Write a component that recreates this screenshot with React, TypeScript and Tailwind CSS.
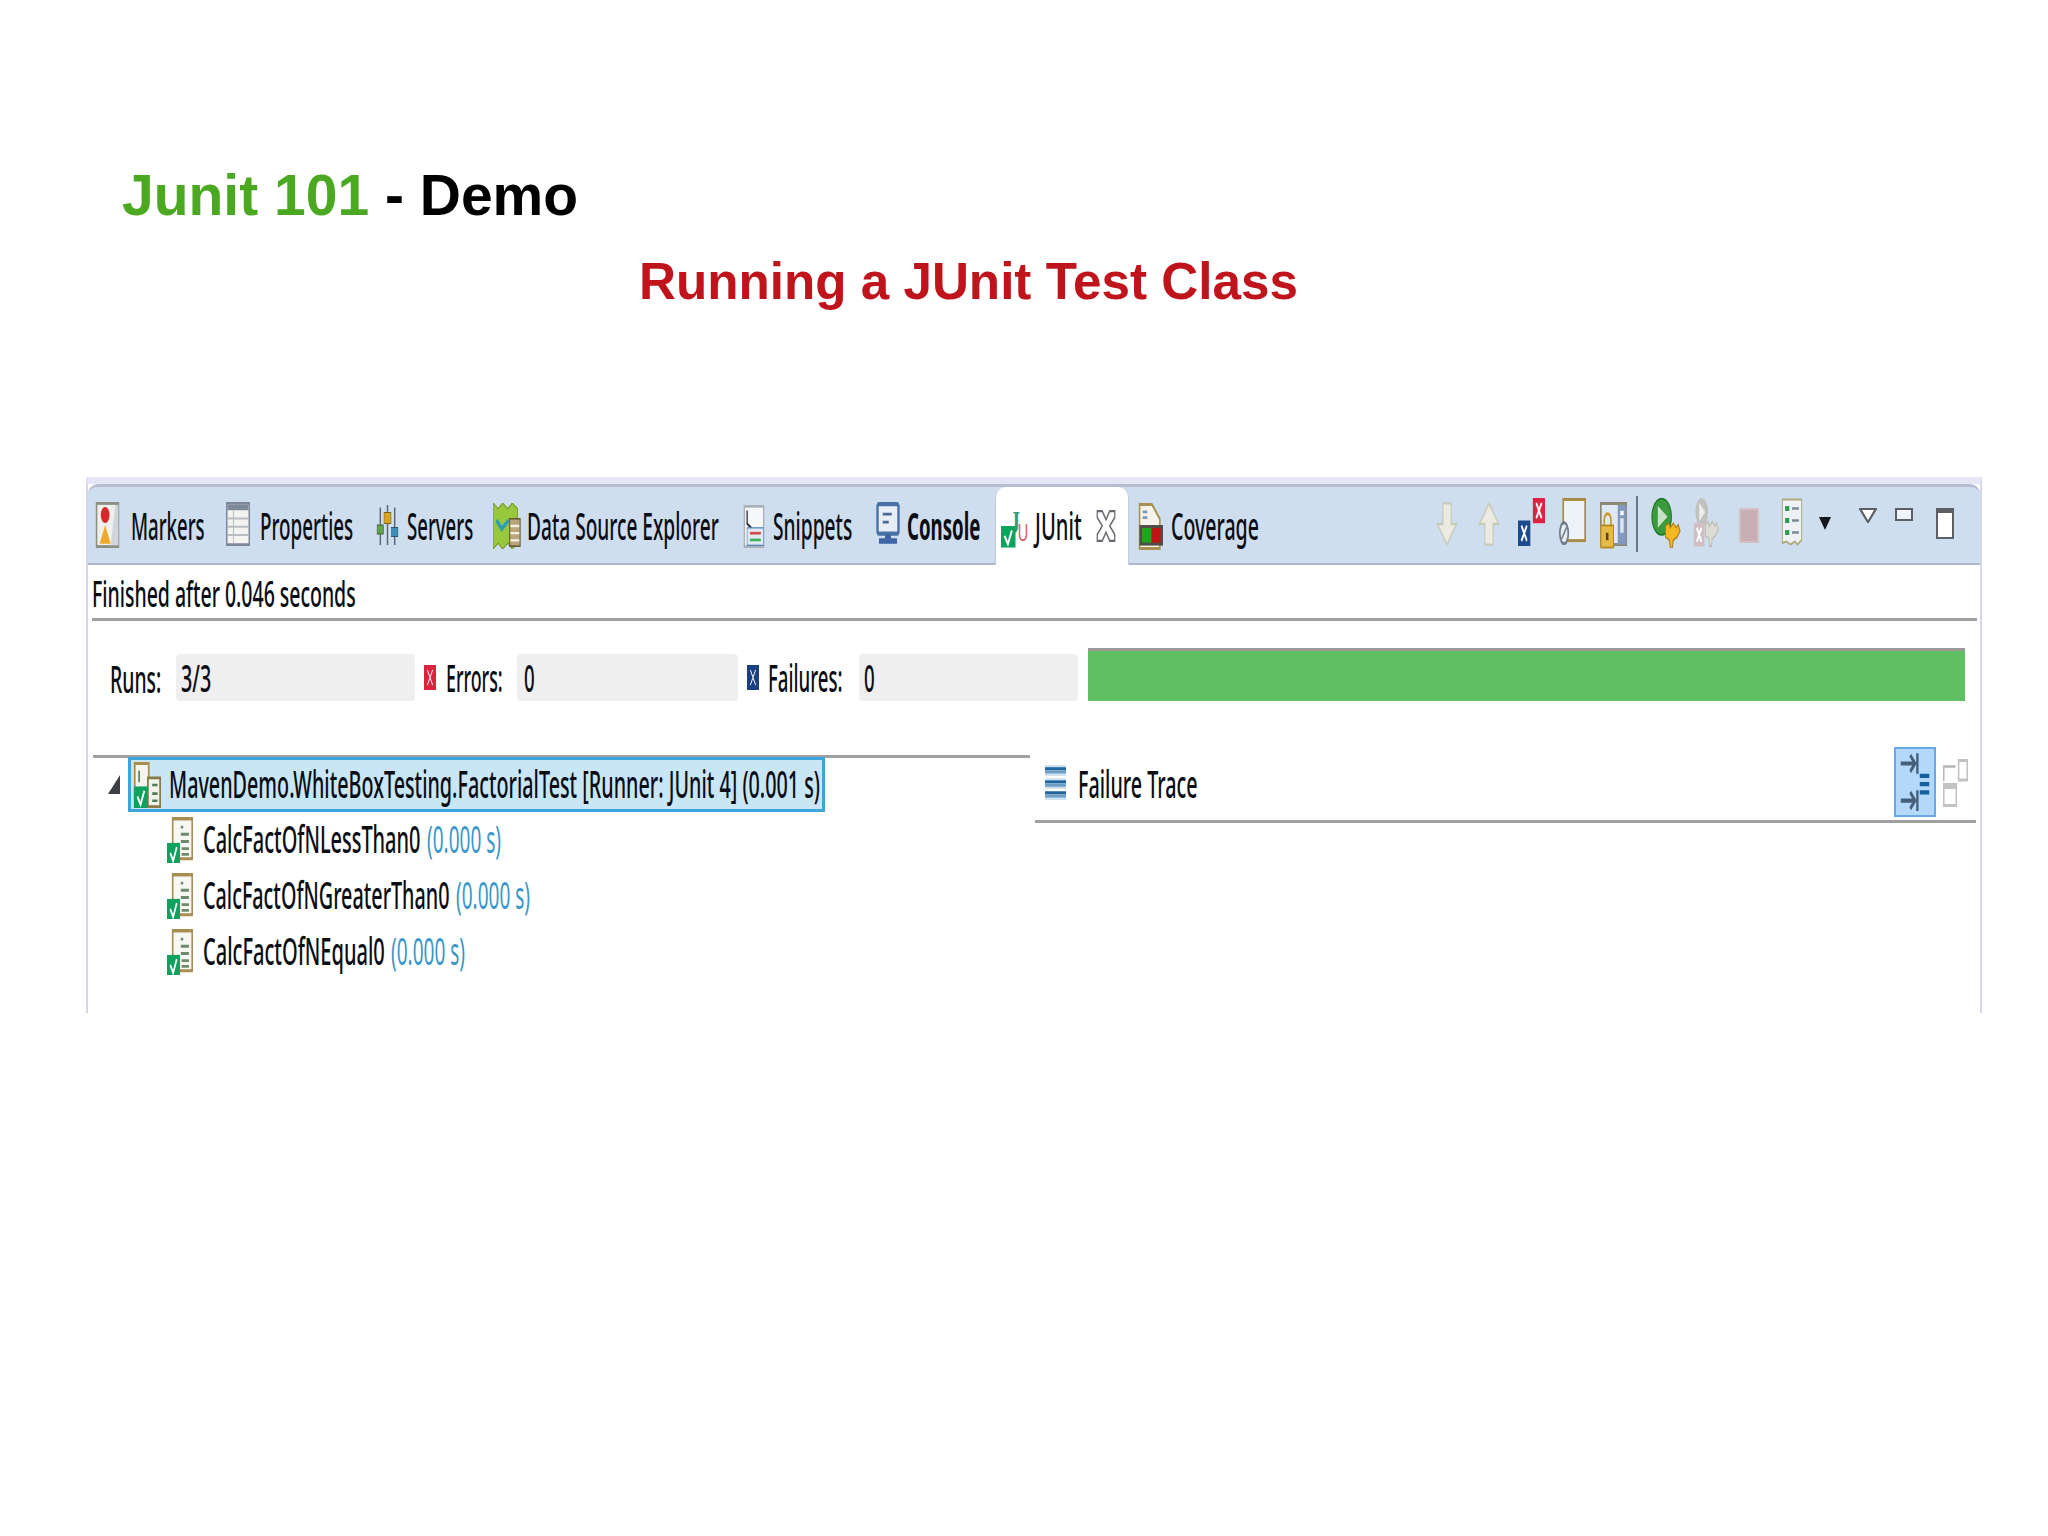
import type { ReactNode } from 'react';
import { twMerge } from 'tailwind-merge';
import { clsx } from 'clsx';

// The reference is a screenshot stretched vertically, so labels get squeezed on x
const Txt = ({ className, children }: { className?: string; children: ReactNode }) => (
  <span className={twMerge('block shrink-0 origin-left scale-x-[0.49] whitespace-nowrap text-[38px] font-medium leading-none text-[#0a0d14]', className)}>{children}</span>
);

const Ico = ({ className, children }: { className?: string; children: ReactNode }) => (
  <svg viewBox="0 0 16 16" preserveAspectRatio="none" className={clsx('block shrink-0', className)}>
    {children}
  </svg>
);

const CheckBox = ({ x = 0, y = 8.5 }: { x?: number; y?: number }) => (
  <g>
    <rect x={x} y={y} width="8" height="7.5" fill="#0fa25c" />
    <path d={`M${x + 2} ${y + 3.5}l1.8 2.8l2.2-4.8`} fill="none" stroke="#fff" strokeWidth="1" />
  </g>
);

const XBox = ({ x, y, w, h, fill }: { x: number; y: number; w: number; h: number; fill: string }) => (
  <g>
    <rect x={x} y={y} width={w} height={h} fill={fill} />
    <path d={`M${x + w * 0.28} ${y + h * 0.2}L${x + w * 0.72} ${y + h * 0.8}M${x + w * 0.72} ${y + h * 0.2}L${x + w * 0.28} ${y + h * 0.8}`} stroke="#fff" strokeWidth="1" />
  </g>
);

const MarkersIcon = () => (
  <Ico className="mt-[15px] h-[46px] w-[25px]">
    <rect x="1" y="0.5" width="14" height="15" fill="#eef0ee" stroke="#8d8f80" />
    <path d="M13 1h2v14h-5z" fill="#cfd6dc" />
    <circle cx="6.5" cy="4.5" r="2.8" fill="#d62a2a" />
    <path d="M6.5 8L10 14.5H3z" fill="#f0a828" />
  </Ico>
);

const PropertiesIcon = () => (
  <Ico className="mt-[15px] h-[44px] w-[24px]">
    <rect x="0.5" y="0.5" width="15" height="15" fill="#f3f3f1" stroke="#7f8898" />
    <rect x="1" y="1" width="14" height="2" fill="#7f8898" />
    <path d="M1 6h14M1 9h14M1 12h14M5 3v12" stroke="#b9bdc4" strokeWidth="0.7" />
  </Ico>
);

const ServersIcon = () => (
  <Ico className="mt-[18px] h-[40px] w-[23px]">
    <path d="M3 1v15M8 0v16M13 1v15" stroke="#5c6670" strokeWidth="1" />
    <rect x="0.8" y="8" width="4.4" height="3.6" fill="#5fa34a" stroke="#4a5a40" strokeWidth="0.4" />
    <rect x="5.6" y="3" width="4.8" height="4.4" fill="#d9a520" stroke="#7a6420" strokeWidth="0.4" />
    <rect x="10.8" y="9" width="4.4" height="3.6" fill="#3c8db8" stroke="#2a5a7a" strokeWidth="0.4" />
  </Ico>
);

const DataSourceIcon = () => (
  <Ico className="mt-[16px] h-[46px] w-[28px]">
    <path d="M0 0l3 2l2.5-2l3 2l2.5-2l3 2v12l-3 2l-2.5-2l-3 2l-2.5-2l-3 2z" fill="#98c83c" stroke="#7a9a2c" strokeWidth="0.5" />
    <path d="M2 6l3 3l4-3" stroke="#2f9fb0" strokeWidth="1.6" fill="none" />
    <rect x="9.5" y="5.5" width="6" height="9.5" fill="#b8a578" stroke="#6c5c38" strokeWidth="0.6" />
    <path d="M10 8h5M10 10.5h5M10 13h5" stroke="#f4f0e0" strokeWidth="0.8" />
  </Ico>
);

const SnippetsIcon = () => (
  <Ico className="mt-[18px] h-[43px] w-[22px]">
    <rect x="1" y="0.5" width="14" height="15" fill="#f6f7f8" stroke="#aab0b8" />
    <path d="M3 2v5l4 2" stroke="#20242c" strokeWidth="0.9" fill="none" />
    <rect x="3" y="8.5" width="12" height="6.5" fill="#dfeaf4" stroke="#5b88b8" strokeWidth="0.5" />
    <path d="M5 10.5h8" stroke="#d84848" />
    <path d="M5 13h8" stroke="#3fae5a" />
  </Ico>
);

const ConsoleIcon = () => (
  <Ico className="mt-[15px] h-[43px] w-[24px]">
    <rect x="1" y="0.8" width="14" height="11" rx="1" fill="#e8eef6" stroke="#4a70a8" strokeWidth="1.6" />
    <path d="M4.5 4.5h6M4.5 7.5h4" stroke="#4a6a98" strokeWidth="1" />
    <path d="M6 12h4v1.5h4V15.5H2v-2h4z" fill="#3f66a4" />
  </Ico>
);

const JUnitIcon = () => (
  <Ico className="mt-[16px] h-[46px] w-[29px] overflow-visible">
    <text x="5" y="10.5" fontFamily="'Liberation Serif', serif" fontWeight="700" fontSize="11" fill="#3a9a78">J</text>
    <text x="9.2" y="13.2" fontFamily="'Liberation Sans', sans-serif" fontSize="8" fill="#d8586a">U</text>
    <CheckBox y={8} x={0} />
  </Ico>
);

const CoverageIcon = () => (
  <Ico className="mt-[16px] h-[47px] w-[25px]">
    <path d="M1 0.5h8l5 5v10H1z" fill="#f6f4ea" stroke="#a89050" />
    <path d="M3 3h3M3 5h3" stroke="#7c98c0" strokeWidth="0.9" />
    <rect x="1" y="7.5" width="15" height="7" fill="#504c48" />
    <rect x="2.5" y="8.5" width="6" height="5" fill="#1ca81c" />
    <rect x="9" y="8.5" width="5.5" height="5" fill="#c21414" />
  </Ico>
);

const TestIcon = () => (
  <Ico className="h-[46px] w-[26px]">
    <path d="M3.5 0.5h12v14h-12z" fill="#f8f8f2" stroke="#a78e50" />
    <rect x="3.5" y="0" width="12" height="1.2" fill="#a78e50" />
    <path d="M8.5 3.5h1.5M8.5 6h5M8.5 8.5h5M9 11h4.5M9 13h4.5" stroke="#6f8a6c" strokeWidth="1" />
    <CheckBox y={9} />
  </Ico>
);

const RootIcon = () => (
  <Ico className="h-[46px] w-[28px]">
    <path d="M1 0.5h8v12H1z" fill="#f5f5ee" stroke="#a78e50" />
    <path d="M8.5 5.5h7v10h-7z" fill="#eef3ea" stroke="#8a7a48" />
    <path d="M11 8h3M11 11h3M11 13.5h3M3.5 3v4" stroke="#4f7a58" strokeWidth="0.9" />
    <CheckBox y={8.5} x={0.5} />
  </Ico>
);

const ErrorIcon = () => (
  <Ico className="h-[25px] w-[12px]">
    <XBox x={0} y={0} w={16} h={16} fill="#dc2440" />
  </Ico>
);

const FailureIcon = () => (
  <Ico className="h-[25px] w-[12px]">
    <XBox x={0} y={0} w={16} h={16} fill="#1c3f80" />
  </Ico>
);

const Arrow = ({ up }: { up?: boolean }) => (
  <Ico className="mt-[15px] h-[44px] w-[22px]">
    <path
      d={up ? 'M8 0.5L15 8H11V15.5H5V8H1z' : 'M8 15.5L15 8H11V0.5H5V8H1z'}
      fill="#ebebe2"
      stroke="#c8cabc"
      strokeWidth="0.9"
    />
  </Ico>
);

const ErrorsOnlyIcon = () => (
  <Ico className="mt-[11px] h-[48px] w-[27px]">
    <XBox x={8.8} y={0} w={7.2} h={8.4} fill="#dc2440" />
    <XBox x={0} y={7.5} w={7.3} h={8.5} fill="#1c4a8c" />
  </Ico>
);

const ScrollPaneIcon = () => (
  <Ico className="mt-[11px] h-[47px] w-[27px]">
    <rect x="2.5" y="0.5" width="13" height="14" fill="#eef3fa" stroke="#a88a48" />
    <ellipse cx="3" cy="12" rx="2.5" ry="3.6" fill="#e8ecf0" stroke="#6c7a88" />
    <path d="M1.5 14L4.5 10" stroke="#6c7a88" strokeWidth="0.8" />
  </Ico>
);

const LockIcon = () => (
  <Ico className="mt-[15px] h-[47px] w-[27px]">
    <rect x="0.5" y="0.5" width="15" height="14" fill="#dfe9f6" stroke="#8a8670" />
    <rect x="10.5" y="1" width="5" height="13.5" fill="#8298bc" />
    <rect x="12" y="3" width="2" height="1.5" fill="#fff" />
    <rect x="12" y="5.5" width="2" height="5" fill="#dfe6f0" />
    <path d="M2.5 8V6a2 2 0 014 0v2" fill="none" stroke="#c89a28" />
    <rect x="0.5" y="8" width="7.5" height="7.5" fill="#e6ba48" stroke="#b08a20" strokeWidth="0.6" />
    <rect x="3.5" y="10.5" width="1.5" height="2.5" fill="#604010" />
  </Ico>
);

const RunIcon = () => (
  <Ico className="mt-[11px] h-[50px] w-[31px]">
    <ellipse cx="5.5" cy="6" rx="5" ry="5.8" fill="#3c9a3c" stroke="#1e7a28" strokeWidth="0.6" />
    <path d="M3.5 2.5L8.5 6L3.5 9.5z" fill="#c8e2c8" />
    <path d="M7.5 9l1.5-1l1 1.5l1.5-1.5l1.5 1.5l1-1l1 2l-1.5 2l-2 1l-0.5 2.5h-1l-0.5-2.5l-2-1z" fill="#f2b822" stroke="#b07c10" strokeWidth="0.5" />
  </Ico>
);

const RerunFailedIcon = () => (
  <Ico className="mt-[11px] h-[50px] w-[28px]">
    <ellipse cx="5" cy="4.5" rx="3.6" ry="4.4" fill="#c0c0be" />
    <path d="M3.5 1.5L7 4.5L3.5 7.5z" fill="#ecece8" />
    <XBox x={0.5} y={8} w={6} h={7.5} fill="#d2bec2" />
    <path d="M7 8.5l1.5-1l1 1.5l1.5-1.5l1.5 1.5l1-1l1 2l-1.5 2l-2 1l-0.5 2.5h-1l-0.5-2.5l-2-1z" fill="#dcdcd4" stroke="#b8b8b0" strokeWidth="0.5" />
  </Ico>
);

const HistoryIcon = () => (
  <Ico className="mt-[11px] h-[48px] w-[22px]">
    <path d="M1 0.5h14v13.5l-3 1.5l-2-1l-3 1l-3-1l-3 0.5z" fill="#eef2f6" stroke="#b0a878" strokeWidth="0.7" />
    <path d="M3 3.5h3M3 7.5h3M3 11.5h3" stroke="#2d9a50" strokeWidth="1.6" />
    <path d="M8 3.5h5M8 7.5h5M8 11.5h5" stroke="#7c8a98" strokeWidth="0.9" />
  </Ico>
);

const CloseIcon = () => (
  <Ico className="h-[34px] w-[20px]">
    <path d="M1 1h4l3 4l3-4h4v3l-4 4l4 4v3h-4l-3-4l-3 4H1v-3l4-4L1 4z" fill="#fff" stroke="#666a70" strokeWidth="1" />
  </Ico>
);

const TraceIcon = () => (
  <Ico className="h-[35px] w-[21px]">
    <rect y="0" width="16" height="1" fill="#cfe2f2" />
    <rect y="1" width="16" height="1.4" fill="#1f669e" />
    <rect y="2.4" width="16" height="1.6" fill="#6d9fc6" />
    <rect y="4" width="16" height="1" fill="#cfe2f2" />
    <rect y="6" width="16" height="1" fill="#cfe2f2" />
    <rect y="7" width="16" height="1.4" fill="#1f669e" />
    <rect y="8.4" width="16" height="1.6" fill="#6d9fc6" />
    <rect y="10" width="16" height="1" fill="#cfe2f2" />
    <rect y="12" width="16" height="1.4" fill="#1f669e" />
    <rect y="13.4" width="16" height="1.6" fill="#6d9fc6" />
    <rect y="15" width="16" height="1" fill="#cfe2f2" />
  </Ico>
);

const tabs = [
  { key: 'markers', icon: <MarkersIcon />, gap: 'ml-[7px]', label: 'Markers', iconGap: 'ml-[11px]', w: 'w-[74px]', scale: 'scale-x-[0.49]' },
  { key: 'properties', icon: <PropertiesIcon />, gap: 'ml-[21px]', label: 'Properties', iconGap: 'ml-[10px]', w: 'w-[95px]', scale: 'scale-x-[0.495]' },
  { key: 'servers', icon: <ServersIcon />, gap: 'ml-[21px]', label: 'Servers', iconGap: 'ml-[8px]', w: 'w-[67px]', scale: 'scale-x-[0.49]' },
  { key: 'datasource', icon: <DataSourceIcon />, gap: 'ml-[19px]', label: 'Data Source Explorer', iconGap: 'ml-[6px]', w: 'w-[194px]', scale: 'scale-x-[0.503]' },
  { key: 'snippets', icon: <SnippetsIcon />, gap: 'ml-[22px]', label: 'Snippets', iconGap: 'ml-[8px]', w: 'w-[81px]', scale: 'scale-x-[0.505]' },
];

const tests = [
  { name: 'CalcFactOfNLessThan0', w: 'w-[224px]', scale: 'scale-x-[0.525]' },
  { name: 'CalcFactOfNGreaterThan0', w: 'w-[253px]', scale: 'scale-x-[0.52]' },
  { name: 'CalcFactOfNEqual0', w: 'w-[188px]', scale: 'scale-x-[0.527]' },
];

export default function App() {
  return (
    <div className="min-h-[1536px] w-[2048px] bg-white pt-[167px] font-['Liberation_Sans',Arial,sans-serif]">
      <h1 className="ml-[122px] text-[57px] font-bold leading-none text-black">
        <span className="text-[#4aa821]">Junit 101</span> - Demo
      </h1>
      <h2 className="ml-[639px] mt-[32px] text-[51.2px] font-bold leading-none text-[#c0141c]">Running a JUnit Test Class</h2>

      <section className="ml-[86px] mt-[170px] h-[536px] w-[1896px] border-x-2 border-[#d6d7ec] border-t-[7px] border-t-[#e4e5f5] font-['Noto_Sans',sans-serif]">
        {/* Tab bar */}
        <div className="flex h-[81px] rounded-t-[10px] border-y-[3px] border-b-[2px] border-t-[#b6bdd0] border-b-[#adb8c8] bg-[#cfdeee]">
          {tabs.map((tab) => (
            <div key={tab.key} className={clsx('flex shrink-0', tab.gap)}>
              {tab.icon}
              <div className={clsx('mt-[15px] flex h-[46px] items-center', tab.iconGap, tab.w)}>
                <Txt className={tab.scale}>{tab.label}</Txt>
              </div>
            </div>
          ))}
          <div className="ml-[22px] flex shrink-0">
            <ConsoleIcon />
            <div className="ml-[7px] mt-[15px] flex h-[46px] w-[76px] items-center">
              <Txt className="font-bold scale-x-[0.49]">Console</Txt>
            </div>
          </div>
          <div className="relative ml-[12px] -mb-[2px] flex w-[134px] shrink-0 rounded-t-[10px] border-x border-[#c4ccd8] bg-white pl-[5px]">
            <JUnitIcon />
            <div className="ml-[3px] mt-[15px] flex h-[46px] w-[49px] items-center">
              <Txt className="scale-x-[0.53] pl-[4px]">JUnit</Txt>
            </div>
            <div className="ml-[14px] mt-[22px]">
              <CloseIcon />
            </div>
          </div>
          <div className="ml-[9px] flex shrink-0">
            <CoverageIcon />
            <div className="ml-[8px] mt-[15px] flex h-[46px] w-[90px] items-center">
              <Txt className="scale-x-[0.515]">Coverage</Txt>
            </div>
          </div>

          {/* View toolbar */}
          <div className="ml-[175px] flex shrink-0">
            <Arrow />
            <div className="ml-[20px]">
              <Arrow up />
            </div>
            <div className="ml-[18px]">
              <ErrorsOnlyIcon />
            </div>
            <div className="ml-[14px]">
              <ScrollPaneIcon />
            </div>
            <div className="ml-[14px]">
              <LockIcon />
            </div>
            <div className="ml-[9px] mt-[9px] h-[56px] w-[2px] bg-[#6c7480]" />
            <div className="ml-[13px]">
              <RunIcon />
            </div>
            <div className="ml-[11px]">
              <RerunFailedIcon />
            </div>
            <div className="ml-[18px] mt-[21px] h-[35px] w-[20px] border-2 border-[#d4bfc4] bg-[#c9aeb4]" />
            <div className="ml-[22px]">
              <HistoryIcon />
            </div>
            <div className="ml-[16px] mt-[30px] h-0 w-0 border-x-[6px] border-t-[13px] border-x-transparent border-t-[#14181c]" />
            <div className="ml-[28px] mt-[21px] h-[15px] w-[18px]">
              <Ico className="h-full w-full">
                <path d="M1 1h14L8 15z" fill="#fff" stroke="#5c6066" strokeWidth="2" />
              </Ico>
            </div>
            <div className="ml-[18px] mt-[21px] h-[13px] w-[18px] border-2 border-[#5c6066] bg-[#eef3f9]" />
            <div className="ml-[23px] mt-[21px] h-[31px] w-[18px] border-2 border-t-[5px] border-[#5c6066] bg-white" />
          </div>
        </div>

        {/* Status line */}
        <div className="ml-[4px] mr-[3px] flex h-[56px] items-center border-b-[3px] border-[#a0a0a0] pt-[2px]">
          <Txt className="text-[37px] scale-x-[0.526]">Finished after 0.046 seconds</Txt>
        </div>

        {/* Counters and progress bar */}
        <div className="mt-[27px] flex h-[53px] items-end">
          <div className="ml-[22px] flex h-[45px] w-[66px] items-center self-end pb-[2px]">
            <Txt className="scale-x-[0.51]">Runs:</Txt>
          </div>
          <div className="flex h-[47px] w-[239px] items-center rounded-sm bg-[#f0eff0] pb-[2px] pl-[5px]">
            <Txt className="scale-x-[0.52]">3/3</Txt>
          </div>
          <div className="ml-[9px] flex h-[47px] items-center">
            <ErrorIcon />
          </div>
          <div className="ml-[10px] flex h-[47px] w-[71px] items-center pb-[2px]">
            <Txt className="scale-x-[0.47]">Errors:</Txt>
          </div>
          <div className="flex h-[47px] w-[221px] items-center rounded-sm bg-[#f0eff0] pb-[2px] pl-[7px]">
            <Txt>0</Txt>
          </div>
          <div className="ml-[9px] flex h-[47px] items-center">
            <FailureIcon />
          </div>
          <div className="ml-[9px] flex h-[47px] w-[91px] items-center pb-[2px]">
            <Txt>Failures:</Txt>
          </div>
          <div className="flex h-[47px] w-[219px] items-center rounded-sm bg-[#f0eff0] pb-[2px] pl-[5px]">
            <Txt>0</Txt>
          </div>
          <div className="ml-[10px] h-[53px] w-[877px] border-t-[3px] border-[#9a9a9a] bg-[#60bf62]" />
        </div>

        {/* Test tree and failure trace */}
        <div className="mt-[46px] flex">
          <div className="ml-[5px] w-[937px] pt-[8px]">
            <div className="h-[3px] bg-[#a0a0a0]" />
            <div className="-mt-[1px] flex items-center">
              <div className="ml-[15px] h-0 w-0 border-b-[19px] border-l-[12px] border-b-[#3c4046] border-l-transparent" />
              <div className="ml-[8px] flex h-[55px] w-[697px] items-center border-[3px] border-[#3ca6dc] bg-[#c9e6f7] pl-[2px]">
                <RootIcon />
                <div className="ml-[8px] pb-[4px]">
                  <Txt className="scale-x-[0.52]">MavenDemo.WhiteBoxTesting.FactorialTest [Runner: JUnit 4] (0.001 s)</Txt>
                </div>
              </div>
            </div>
            {tests.map((test) => (
              <div key={test.name} className="ml-[74px] flex h-[56px] items-center">
                <TestIcon />
                <div className={clsx('ml-[10px] pb-[4px]', test.w)}>
                  <Txt className={test.scale}>{test.name}</Txt>
                </div>
                <div className="pb-[4px]">
                  <Txt className="text-[#3a97c9] font-normal scale-x-[0.5]">(0.000 s)</Txt>
                </div>
              </div>
            ))}
          </div>

          <div className="ml-[5px] w-[941px]">
            <div className="flex h-[76px] items-start border-b-[3px] border-[#a0a0a0]">
              <div className="ml-[10px] mt-[15px] flex items-center">
                <TraceIcon />
                <div className="ml-[12px] pt-[2px]">
                  <Txt className="scale-x-[0.52]">Failure Trace</Txt>
                </div>
              </div>
              <div className="ml-auto flex">
                <div className="h-[70px] w-[42px] border-2 border-[#6aa9e8] bg-[#b4d8fa]">
                  <Ico className="h-full w-full">
                    <path d="M2 3.5h6M6 1.5l2 2l-2 2M9 1v5M2 12.5h6M6 10.5l2 2l-2 2M9 10v5" fill="none" stroke="#46607a" strokeWidth="1" />
                    <path d="M10 6.5h4M10 8.5h4M10 10.5h4" stroke="#14609e" strokeWidth="1" />
                  </Ico>
                </div>
                <div className="ml-[7px] mr-[8px] mt-[12px] h-[48px] w-[25px]">
                  <Ico className="h-full w-full">
                    <rect x="10" y="0.5" width="5.5" height="6.5" fill="#fff" stroke="#c2c2c2" />
                    <path d="M0.5 6.5V2.5H8M0.5 6.5v1" fill="none" stroke="#b4b4b4" strokeWidth="0.9" />
                    <rect x="0.5" y="8.5" width="8" height="7" fill="#fff" stroke="#c2c2c2" />
                    <rect x="0.5" y="8.5" width="8" height="1.5" fill="#c2c2c2" />
                  </Ico>
                </div>
              </div>
            </div>
          </div>
        </div>
      </section>
    </div>
  );
}
